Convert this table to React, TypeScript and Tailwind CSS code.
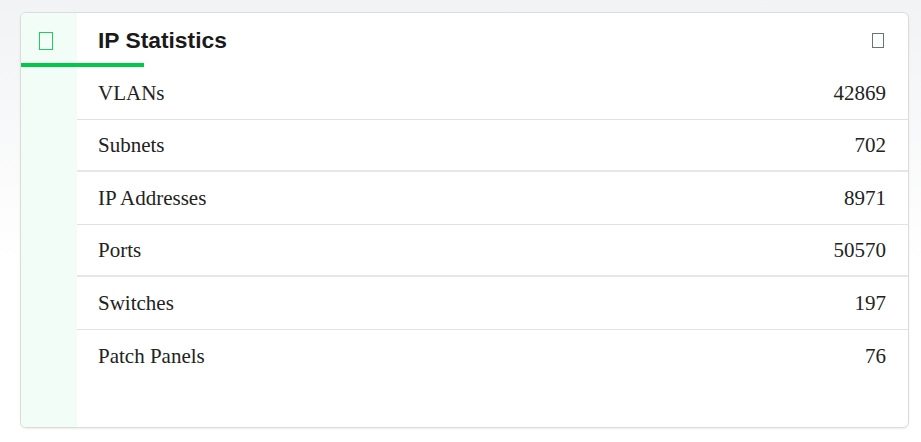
const stats = [
  { label: 'VLANs', value: 42869 },
  { label: 'Subnets', value: 702 },
  { label: 'IP Addresses', value: 8971 },
  { label: 'Ports', value: 50570 },
  { label: 'Switches', value: 197 },
  { label: 'Patch Panels', value: 76 },
];

export default function App() {
  return (
    <div className="min-h-screen bg-linear-to-b from-[#f2f3f5] from-0% to-white to-60% pt-3 pl-5 pr-3 pb-[14px]">
      <div className="flex h-[416px] flex-col overflow-hidden rounded-md border border-[#dcdcdc] bg-white shadow-[0_1px_2px_rgba(0,0,0,0.08)]">
        {/* header */}
        <div className="flex h-[50px] shrink-0">
          <div className="w-[56px] shrink-0 bg-[#f3fdf7] pl-[18px] pt-[19px]">
            <span className="block h-[18px] w-[14px] border border-[#1fcf5a]" />
          </div>
          <div className="flex flex-1 items-start justify-between pl-[21px] pr-[24px]">
            <h2 className="pt-4 font-['Liberation_Sans',Arial,sans-serif] text-[22.8px] font-bold leading-none text-[#1a1a1a]">
              IP Statistics
            </h2>
            <span className="mt-[20px] block h-[15px] w-[12px] border border-[#68737f]" />
          </div>
        </div>
        <div className="h-1 w-[123px] shrink-0 bg-[#00c94a]" />

        {/* body */}
        <div className="flex flex-1">
          <div className="w-[56px] shrink-0 bg-[#f3fdf7]" />
          <div className="flex-1 font-['Liberation_Serif','Times_New_Roman',serif] text-[21px] text-[#222]">
            {stats.map((s, i) => (
              <div
                key={s.label}
                className={`flex h-[52.5px] items-center justify-between pt-[2px] pl-[21px] pr-[22px] ${
                  i === stats.length - 1
                    ? ''
                    : i % 2 === 1
                      ? 'border-b-2 border-[#e3e6ea]'
                      : 'border-b border-[#dfe2e6]'
                }`}
              >
                <span>{s.label}</span>
                <span>{s.value}</span>
              </div>
            ))}
          </div>
        </div>
      </div>
    </div>
  );
}
